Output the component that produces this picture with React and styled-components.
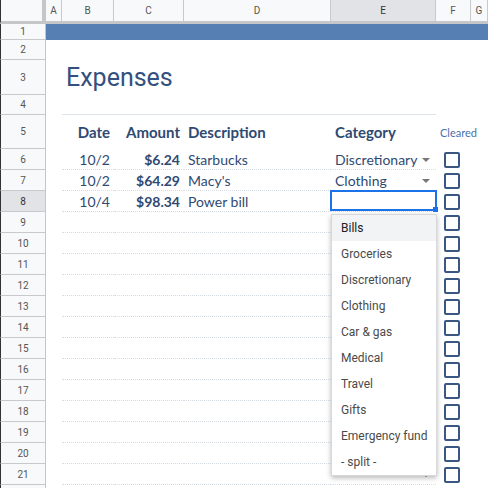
import React from 'react';
import styled, { createGlobalStyle } from 'styled-components';

const COLS = '46px 16px 52px 70px 147px 105px 35px 1fr';
const INK = '#2f4a72';

const GlobalStyle = createGlobalStyle`
  html, body {
    margin: 0;
    padding: 0;
    background: #fff;
  }
  * {
    box-sizing: border-box;
  }
`;

const Sheet = styled.div`
  width: 488px;
  height: 488px;
  overflow: hidden;
  background: #fff;
  font-family: Lato, 'Liberation Sans', sans-serif;
`;

const HeaderBar = styled.div`
  display: grid;
  grid-template-columns: ${COLS};
  height: 24px;
`;

const Corner = styled.div`
  background: #f8f9fa;
  border-left: 1px solid #333;
  border-right: 4px solid #c4c6c8;
  border-bottom: 3px solid #c4c6c8;
`;

const ColHead = styled.div`
  display: flex;
  align-items: center;
  justify-content: center;
  background: ${(p) => (p.$active ? '#e1e3e6' : '#f8f9fa')};
  border-right: 1px solid #c7c9cb;
  border-bottom: 3px solid #c4c6c8;
  font-family: Roboto, 'Liberation Sans', sans-serif;
  font-size: 10px;
  color: ${(p) => (p.$active ? '#333' : '#555')};
`;

const SheetRow = styled.div`
  display: grid;
  grid-template-columns: ${COLS};
  height: ${(p) => p.$h}px;
`;

const RowHead = styled.div`
  display: flex;
  align-items: center;
  justify-content: center;
  background: ${(p) => (p.$active ? '#e1e3e6' : '#f8f9fa')};
  border-left: 1px solid #333;
  border-right: 1px solid #c4c6c8;
  border-bottom: 1px solid #c7c9cb;
  font-family: Roboto, 'Liberation Sans', sans-serif;
  font-size: 10px;
  color: ${(p) => (p.$active ? '#333' : '#555')};
`;

const Band = styled.div`
  grid-column: 2 / -1;
  background: #5680b3;
`;

const Cell = styled.div`
  position: relative;
  display: flex;
  align-items: center;
  justify-content: ${(p) => (p.$align === 'right' ? 'flex-end' : 'space-between')};
  padding: ${(p) => (p.$align === 'right' ? '0 4px 0 0' : '0 6px 0 4px')};
  white-space: nowrap;
  min-width: 0;
  color: ${INK};
  font-size: 14px;
  border-bottom: ${(p) =>
    p.$rule === 'solid'
      ? '1px solid #dde3ea'
      : p.$rule === 'dotted'
      ? '1px dotted #d6dde5'
      : 'none'};
  z-index: ${(p) => (p.$top ? 5 : 'auto')};
`;

const Title = styled.span`
  font-family: Roboto, 'Liberation Sans', sans-serif;
  font-size: 25px;
  color: #33507e;
`;

const HeadText = styled.span`
  font-weight: 700;
  font-size: 15px;
`;

const Cleared = styled.span`
  font-size: 11px;
  color: #4a72ad;
`;

const Strong = styled.span`
  font-weight: 700;
`;

const Caret = styled.span`
  width: 0;
  height: 0;
  border-left: 4px solid transparent;
  border-right: 4px solid transparent;
  border-top: 4px solid #777;
  margin-top: 1px;
`;

const Check = styled.div`
  width: 16px;
  height: 16px;
  margin: auto;
  border: 2px solid #3a5683;
  border-radius: 2px;
`;

const ActiveBox = styled.div`
  position: absolute;
  inset: -1px -1px 0 -1px;
  border: 2px solid #1a73e8;
  &::after {
    content: '';
    position: absolute;
    right: -3px;
    bottom: -3px;
    width: 5px;
    height: 5px;
    background: #1a73e8;
  }
`;

const Menu = styled.div`
  position: absolute;
  top: 23px;
  left: 0;
  width: 106px;
  background: #fff;
  border: 1px solid #d6d8db;
  box-shadow: 0 2px 5px rgba(0, 0, 0, 0.28);
  font-family: Roboto, 'Liberation Sans', sans-serif;
  z-index: 10;
`;

const MenuItem = styled.div`
  height: 26px;
  display: flex;
  align-items: center;
  padding-left: 9px;
  font-size: 12px;
  color: ${(p) => (p.$hl ? '#202124' : '#4a4a4a')};
  background: ${(p) => (p.$hl ? '#f1f3f4' : '#fff')};
`;

const entries = [
  { date: '10/2', amount: '$6.24', desc: 'Starbucks', cat: 'Discretionary' },
  { date: '10/2', amount: '$64.29', desc: "Macy's", cat: 'Clothing' },
  { date: '10/4', amount: '$98.34', desc: 'Power bill', cat: '' },
];

const options = [
  'Bills',
  'Groceries',
  'Discretionary',
  'Clothing',
  'Car & gas',
  'Medical',
  'Travel',
  'Gifts',
  'Emergency fund',
  '- split -',
];

const letters = ['A', 'B', 'C', 'D', 'E', 'F', 'G'];

function DataRow({ n, entry, label = true }) {
  const active = n === 8;
  return (
    <SheetRow $h={21}>
      <RowHead $active={active}>{label && n}</RowHead>
      <Cell />
      <Cell $align="right" $rule="dotted">{entry && entry.date}</Cell>
      <Cell $align="right" $rule="dotted">
        {entry && <Strong>{entry.amount}</Strong>}
      </Cell>
      <Cell $rule="dotted">{entry && entry.desc}</Cell>
      <Cell $rule="dotted" $top={active}>
        <span>{entry && entry.cat}</span>
        {!active && <Caret />}
        {active && (
          <>
            <ActiveBox />
            <Menu>
              {options.map((o, i) => (
                <MenuItem key={o} $hl={i === 0}>
                  {o}
                </MenuItem>
              ))}
            </Menu>
          </>
        )}
      </Cell>
      <Cell $align="right">
        <Check />
      </Cell>
      <Cell />
    </SheetRow>
  );
}

export default function App() {
  const dataRows = [];
  for (let n = 6; n <= 22; n++) {
    dataRows.push(<DataRow key={n} n={n} entry={entries[n - 6]} label={n < 22} />);
  }
  return (
    <Sheet>
      <GlobalStyle />
      <HeaderBar>
        <Corner />
        {letters.map((l) => (
          <ColHead key={l} $active={l === 'E'}>
            {l}
          </ColHead>
        ))}
      </HeaderBar>

      <SheetRow $h={16}>
        <RowHead>1</RowHead>
        <Band />
      </SheetRow>

      <SheetRow $h={20}>
        <RowHead>2</RowHead>
      </SheetRow>

      <SheetRow $h={35}>
        <RowHead>3</RowHead>
        <Cell />
        <Cell>
          <Title>Expenses</Title>
        </Cell>
      </SheetRow>

      <SheetRow $h={20}>
        <RowHead>4</RowHead>
        <Cell />
        <Cell $rule="solid" />
        <Cell $rule="solid" />
        <Cell $rule="solid" />
        <Cell $rule="solid" />
      </SheetRow>

      <SheetRow $h={34}>
        <RowHead>5</RowHead>
        <Cell />
        <Cell $align="right">
          <HeadText>Date</HeadText>
        </Cell>
        <Cell $align="right">
          <HeadText>Amount</HeadText>
        </Cell>
        <Cell>
          <HeadText>Description</HeadText>
        </Cell>
        <Cell>
          <HeadText>Category</HeadText>
        </Cell>
        <Cell>
          <Cleared>Cleared</Cleared>
        </Cell>
      </SheetRow>

      {dataRows}
    </Sheet>
  );
}
